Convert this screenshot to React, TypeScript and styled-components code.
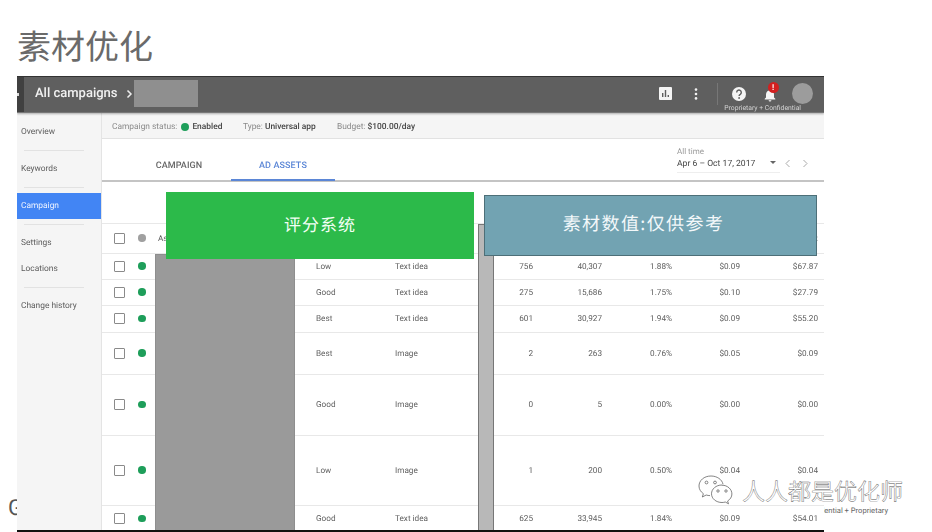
import React from "react";
import styled, { createGlobalStyle } from "styled-components";

const Global = createGlobalStyle`
  html, body { margin: 0; padding: 0; background: #fff; }
  #root { width: 932px; height: 532px; overflow: hidden; }
`;
const CJK = `"Noto Sans CJK SC", "Noto Sans", sans-serif`;
const UI = `Roboto, "Liberation Sans", sans-serif`;

const Slide = styled.div`
  position: relative; width: 932px; height: 532px; overflow: hidden; background: #fff;
  display: flex; flex-direction: column; font-family: ${UI}; text-rendering: geometricPrecision;
`;
const Title = styled.h1`
  margin: 0; height: 76px; box-sizing: border-box; padding: 20px 0 0 17px;
  font: 400 34px/50px ${CJK}; color: #6a6a6a; letter-spacing: 0;
`;
const Frame = styled.div`
  position: relative; z-index: 1; margin-left: 17px; width: 807px; height: 456px; box-sizing: border-box;
  border-bottom: 2px solid #111; background: #fff; overflow: hidden;
  display: flex; flex-direction: column; filter: blur(0.3px);
`;
const TopBar = styled.header`
  height: 37px; flex: none; box-sizing: border-box; display: flex; align-items: center; padding-bottom: 2px;
  background: #5f5f5f; border-top: 1px solid #333; border-bottom: 1px solid #777; color: #fff;
  box-shadow: 0 1px 2px rgba(0,0,0,.3); position: relative; z-index: 1;
`;
const MenuStub = styled.div`
  width: 7px; align-self: stretch; margin-bottom: -2px; background: #404040; display: flex; align-items: center; flex: none;
  &::after { content: ""; width: 2px; height: 3px; background: #ddd; }
`;
const Crumb = styled.span`
  margin-left: 11px; font-size: 13px; font-weight: 500; color: #f2f2f2; width: 99px; flex: none; white-space: nowrap;
  display: flex; align-items: center; justify-content: space-between; padding-right: 1px; box-sizing: border-box;
`;
const Redacted = styled.div`
  width: 64px; height: 27px; margin-left: 0; background: #8f8f8f; flex: none;
`;
const BarTools = styled.div`
  margin-left: auto; display: flex; align-items: center; height: 100%; position: relative;
`;
const ToolSlot = styled.div<{ $w: number }>`
  width: ${(p) => p.$w}px; display: flex; justify-content: center; align-items: center; flex: none;
`;
const BarRule = styled.div`
  width: 1px; height: 22px; background: #777; flex: none;
`;
const Avatar = styled.div`
  width: 21px; height: 21px; border-radius: 50%; background: #9c9c9c; flex: none; margin: 0 11px 0 12px;
`;
const BellWrap = styled.div`
  position: relative; width: 14px; height: 14px;
`;
const Badge = styled.span`
  position: absolute; left: 5px; top: -5px; width: 11px; height: 11px; border-radius: 50%;
  background: #d32020; color: #fff; font: 700 8px/11px ${UI}; text-align: center;
`;
const Proprietary = styled.span`
  position: absolute; right: 23px; bottom: -3px; font-size: 6.8px; line-height: 9px; color: #d4d4d4; white-space: nowrap;
`;
const Body = styled.div`
  flex: 1; display: flex; min-height: 0;
`;
const Sidebar = styled.nav`
  width: 85px; flex: none; box-sizing: border-box; background: #f5f5f5; border-right: 1px solid #e4e4e4;
  display: flex; flex-direction: column;
`;
const NavItem = styled.div<{ $h: number; $active?: boolean; $after?: number }>`
  height: ${(p) => p.$h}px; flex: none; box-sizing: border-box; display: flex; align-items: center; padding: 0 0 0 4px;
  font-size: 8.4px; color: ${(p) => (p.$active ? "#eef3ff" : "#5c5c5c")};
  background: ${(p) => (p.$active ? "#4285f4" : "transparent")};
  margin-bottom: ${(p) => p.$after ?? 0}px; white-space: nowrap;
`;
const NavRule = styled.div<{ $after?: number }>`
  height: 1px; width: 60px; margin: 0 0 ${(p) => p.$after ?? 0}px 7px; background: #e2e2e2; flex: none;
`;
const Main = styled.main`
  flex: 1; display: flex; flex-direction: column; min-width: 0;
`;
const StatusBar = styled.div`
  height: 26px; flex: none; box-sizing: border-box; display: flex; align-items: center; padding: 2px 0 0 10px;
  background: #f5f5f5; border-bottom: 1px solid #e2e2e2; font-size: 8.4px; color: #8a8a8a;
`;
const StatusItem = styled.span<{ $w: number }>`
  width: ${(p) => p.$w}px; flex: none; display: flex; align-items: center; gap: 3px; white-space: nowrap;
  b { font-weight: 500; color: #444; }
`;
const StatusDot = styled.i`
  width: 8px; height: 8px; border-radius: 50%; background: #1e9e5a; display: inline-block; margin-left: 1px;
`;
const TabRow = styled.div`
  height: 43px; flex: none; box-sizing: border-box; display: flex; padding-left: 25px; border-bottom: 2px solid #c4c4c4;
`;
const Tab = styled.div<{ $active?: boolean }>`
  width: 104px; height: 42px; box-sizing: border-box; display: flex; align-items: center; justify-content: center;
  padding-top: 14px; font-size: 9px; font-weight: 500; letter-spacing: .1px;
  color: ${(p) => (p.$active ? "#5b86d6" : "#666")};
  border-bottom: 2px solid ${(p) => (p.$active ? "#5b86d6" : "transparent")};
`;
const DatePick = styled.div`
  margin-left: auto; margin-right: 44px; width: 103px; height: 34px; box-sizing: border-box; padding-top: 7px;
  border-bottom: 1px solid #eee; font-size: 8.6px; line-height: 12px; color: #444; white-space: nowrap;
  small { display: block; font-size: 8px; color: #999; line-height: 12px; }
  position: relative;
`;
const Caret = styled.span`
  position: absolute; right: 4px; bottom: 8px; width: 0; height: 0;
  border: 3.5px solid transparent; border-top: 3.5px solid #666; border-bottom: 0;
`;
const Pager = styled.div`
  position: absolute; left: 107px; bottom: 4px; display: flex; gap: 11px; color: #bbb;
`;
const Gap = styled.div`
  height: 41px; flex: none;
`;
const Row = styled.div<{ $h: number }>`
  height: ${(p) => p.$h}px; flex: none; box-sizing: border-box; display: grid; align-items: center;
  grid-template-columns: 12px 32px 158px 79px 83px 55px 69px 70px 68px 78px;
  padding: 0 6px 0 12px; border-top: 1px solid #e8e8e8; font-size: 8.2px; color: #5e5e5e;
`;
const Box = styled.span`
  width: 9px; height: 9px; border: 1.3px solid #8a8a8a; border-radius: 1px; box-sizing: content-box; justify-self: start;
  margin-top: -1px;
`;
const Dot = styled.span<{ $off?: boolean }>`
  width: 7.5px; height: 7.5px; border-radius: 50%; justify-self: center; margin-top: -1px;
  background: ${(p) => (p.$off ? "#a0a0a0" : "#1e9e5a")};
`;
const Num = styled.span`
  text-align: right; white-space: nowrap;
`;
const AssetBlock = styled.div`
  position: absolute; left: 138px; top: 178px; width: 140px; height: 290px; box-sizing: border-box;
  background: #9a9a9a; border: 1px solid #8e8e8e;
`;
const Strip = styled.div`
  position: absolute; left: 461px; top: 148px; width: 16px; height: 320px; box-sizing: border-box;
  background: #b8b8b8; border: 1px solid #777;
`;
const GreenNote = styled.div`
  position: absolute; z-index: 2; left: 166px; top: 192px; width: 308px; height: 67px; box-sizing: border-box;
  display: flex; align-items: center; justify-content: center; padding-bottom: 3px;
  background: #2cba4a; color: #f3fff5; font: 400 17px/20px ${CJK}; letter-spacing: 1px;
`;
const TealNote = styled.div`
  position: absolute; z-index: 2; left: 484px; top: 195px; width: 333px; height: 61px; box-sizing: border-box;
  display: flex; align-items: center; justify-content: center; padding: 0 14px 6px 0;
  background: #72a3b2; border: 1px solid #4d6f78; color: #f3f8fa; font: 400 18px/20px ${CJK}; letter-spacing: 1.4px;
`;
const FooterG = styled.span`
  position: absolute; left: 8px; top: 497px; font: 400 22px/24px ${UI}; color: #555;
`;
const FooterNote = styled.span`
  position: absolute; right: 44px; top: 506px; font-size: 7.6px; line-height: 10px; color: #666; white-space: nowrap;
`;
const Watermark = styled.div`
  position: absolute; z-index: 3; left: 697px; top: 474px; display: flex; align-items: center; gap: 7px;
  font: 400 23px/31px ${CJK}; color: rgba(255,255,255,.95); white-space: nowrap;
  -webkit-text-stroke: .4px #555;
`;

type R = { h: number; rating: string; type: string; n: string[] };
const rows: R[] = [
  { h: 26, rating: "Low", type: "Text idea", n: ["756", "40,307", "1.88%", "$0.09", "$67.87"] },
  { h: 26, rating: "Good", type: "Text idea", n: ["275", "15,686", "1.75%", "$0.10", "$27.79"] },
  { h: 27, rating: "Best", type: "Text idea", n: ["601", "30,927", "1.94%", "$0.09", "$55.20"] },
  { h: 42, rating: "Best", type: "Image", n: ["2", "263", "0.76%", "$0.05", "$0.09"] },
  { h: 61, rating: "Good", type: "Image", n: ["0", "5", "0.00%", "$0.00", "$0.00"] },
  { h: 70, rating: "Low", type: "Image", n: ["1", "200", "0.50%", "$0.04", "$0.04"] },
  { h: 27, rating: "Good", type: "Text idea", n: ["625", "33,945", "1.84%", "$0.09", "$54.01"] },
];

const ChartIcon = () => (
  <svg width="13" height="13" viewBox="0 0 13 13">
    <rect width="13" height="13" rx="1" fill="#f4f4f4" />
    <path d="M3 6h1.400v4H3zM5.800 3h1.400v7H5.800zM8.600 8h1.400v2H8.600z" fill="#5f5f5f" />
  </svg>
);
const DotsIcon = () => (
  <svg width="4" height="12" viewBox="0 0 4 12" fill="#f2f2f2">
    <circle cx="2" cy="1.600" r="1.300" /><circle cx="2" cy="6" r="1.300" /><circle cx="2" cy="10.400" r="1.300" />
  </svg>
);
const HelpIcon = () => (
  <svg width="14" height="14" viewBox="0 0 14 14">
    <circle cx="7" cy="7" r="7" fill="#f4f4f4" />
    <path d="M4.700 5.400A2.300 2.300 0 1 1 8.300 7.300c-.8.500-1.200.9-1.200 1.800" fill="none" stroke="#5f5f5f" strokeWidth="1.400" />
    <circle cx="7.100" cy="11" r=".9" fill="#5f5f5f" />
  </svg>
);
const BellIcon = () => (
  <svg width="14" height="14" viewBox="0 0 14 14" fill="#f6f6f6">
    <path d="M7 1a1 1 0 0 1 1 1v.4c2 .5 3 2.200 3 4.100V9.500l1.300 1.300v.7H1.700v-.7L3 9.500V6.500c0-1.900 1-3.600 3-4.100V2a1 1 0 0 1 1-1zM5.600 12.200h2.800A1.400 1.400 0 0 1 5.600 12.200z" />
  </svg>
);
const ChevronIcon = () => (
  <svg width="7" height="10" viewBox="0 0 7 10" fill="none" stroke="#eee" strokeWidth="1.500"><path d="M1.500 1.500 5 5 1.500 8.500" /></svg>
);
const ChatIcon = () => (
  <svg width="38" height="32" viewBox="0 0 38 32" fill="none" stroke="#666" strokeWidth=".8">
    <path d="M14 2C7 2 2 6.500 2 12c0 3.200 1.700 5.800 4.400 7.700L5.300 23l3.900-2c1.300.4 2.500.6 3.800.6" />
    <path d="M14 2c6 0 11 3.500 12 8.200" />
    <circle cx="9.500" cy="8.500" r="1.400" /><circle cx="18" cy="8.500" r="1.400" />
    <path d="M25 11c-6 0-10.500 4-10.500 8.800S19 28.500 25 28.500c1.200 0 2.300-.2 3.300-.5l3.200 1.800-.9-2.800c2.600-1.600 4.300-4.100 4.300-7 0-4.800-4.400-8.800-9.900-8.800z" />
    <circle cx="21" cy="17" r="1.200" /><circle cx="29" cy="17" r="1.200" />
  </svg>
);

export default function App() {
  return (
    <Slide>
      <Global />
      <Title>素材优化</Title>
      <FooterG>G</FooterG>
      <FooterNote>Confidential + Proprietary</FooterNote>
      <Frame>
        <TopBar>
          <MenuStub />
          <Crumb>All campaigns<ChevronIcon /></Crumb>
          <Redacted />
          <BarTools>
            <ToolSlot $w={37}><ChartIcon /></ToolSlot>
            <ToolSlot $w={24}><DotsIcon /></ToolSlot>
            <ToolSlot $w={9} />
            <BarRule />
            <ToolSlot $w={41}><HelpIcon /></ToolSlot>
            <ToolSlot $w={21}>
              <BellWrap><BellIcon /><Badge>!</Badge></BellWrap>
            </ToolSlot>
            <Avatar />
            <Proprietary>Proprietary + Confidential</Proprietary>
          </BarTools>
        </TopBar>
        <Body>
          <Sidebar>
            <NavItem $h={37}>Overview</NavItem>
            <NavRule />
            <NavItem $h={36}>Keywords</NavItem>
            <NavRule $after={5} />
            <NavItem $h={26} $active $after={5}>Campaign</NavItem>
            <NavRule />
            <NavItem $h={36}>Settings</NavItem>
            <NavItem $h={16} $after={10}>Locations</NavItem>
            <NavRule />
            <NavItem $h={36}>Change history</NavItem>
          </Sidebar>
          <Main>
            <StatusBar>
              <StatusItem $w={131}>Campaign status: <StatusDot /> <b>Enabled</b></StatusItem>
              <StatusItem $w={94}><span>Type: <b>Universal app</b></span></StatusItem>
              <StatusItem $w={100}><span>Budget: <b>$100.00/day</b></span></StatusItem>
            </StatusBar>
            <TabRow>
              <Tab>CAMPAIGN</Tab>
              <Tab $active>AD ASSETS</Tab>
              <DatePick>
                <small>All time</small>
                Apr 6 – Oct 17, 2017
                <Caret />
                <Pager>
                  <svg width="7" height="9" viewBox="0 0 7 9" fill="none" stroke="#aaa"><path d="M5.500 1 2 4.500 5.500 8" /></svg>
                  <svg width="7" height="9" viewBox="0 0 7 9" fill="none" stroke="#aaa"><path d="M1.500 1 5 4.500 1.500 8" /></svg>
                </Pager>
              </DatePick>
            </TabRow>
            <Gap />
            <Row $h={30}>
              <Box /><Dot $off /><span>Asset</span><span /><span />
              <Num /><Num /><Num /><Num /><Num>Cost</Num>
            </Row>
            {rows.map((r, i) => (
              <Row $h={r.h} key={i}>
                <Box /><Dot /><span /><span>{r.rating}</span><span>{r.type}</span>
                {r.n.map((v, j) => <Num key={j}>{v}</Num>)}
              </Row>
            ))}
          </Main>
        </Body>
        <AssetBlock />
        <Strip />
      </Frame>
      <GreenNote>评分系统</GreenNote>
      <TealNote>素材数值:仅供参考</TealNote>
      <Watermark><ChatIcon />人人都是优化师</Watermark>
    </Slide>
  );
}
